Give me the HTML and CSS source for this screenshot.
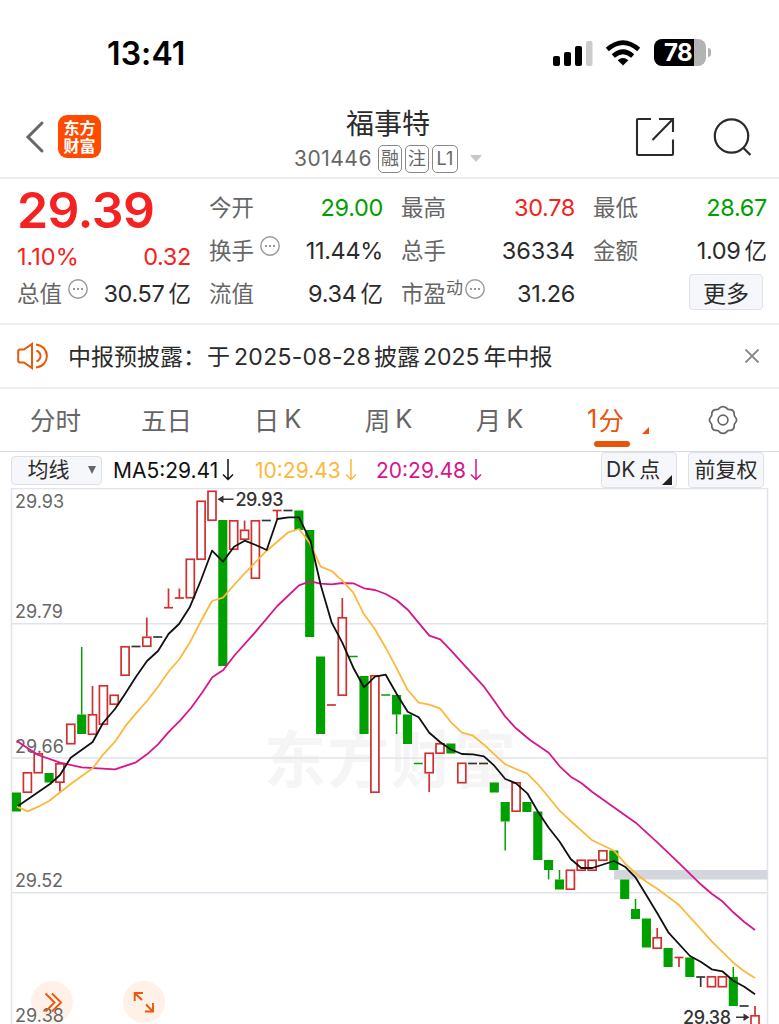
FILE: index.html
```html
<!DOCTYPE html>
<html lang="zh-CN">
<head>
<meta charset="utf-8">
<title>福事特 301446</title>
<link rel="stylesheet" href="styles.css">
</head>
<body>
<div class="phone">
  <header class="status">
    <span class="clock">13:41</span>
    <svg class="signal" width="40" height="26" viewBox="0 0 40 26"><rect x="0" y="16" width="7" height="10" rx="2"/><rect x="11" y="12" width="7" height="14" rx="2"/><rect x="22" y="6" width="7" height="20" rx="2"/><rect x="33" y="1" width="6.5" height="25" rx="2" fill="#ccc"/></svg>
    <svg class="wifi" width="36" height="26" viewBox="0 0 36 26"><path d="M18 25.500L12.700 20.200Q18 15.800 23.300 20.200Z"/><path d="M2.300 9.500Q18-4.300 33.700 9.500M8.300 16Q18 7.500 27.700 16" fill="none" stroke="#000" stroke-width="4.600"/></svg>
    <span class="battery"><b>78</b></span><i class="battery-tip"></i>
  </header>

  <nav class="titlebar">
    <svg class="back" width="20" height="34" viewBox="0 0 20 34"><path d="M17 3L3 17L17 31" fill="none" stroke="#666" stroke-width="3" stroke-linecap="round"/></svg>
    <span class="logo"><span>东方</span><span>财富</span></span>
    <div class="stock">
      <h1>福事特</h1>
      <div class="code"><span class="digits">301446</span><span class="tag">融</span><span class="tag">注</span><span class="tag latin">L1</span><i class="caret"></i></div>
    </div>
    <svg class="share" width="42" height="42" viewBox="0 0 42 42"><path d="M17 2H4Q3 2 3 3V37Q3 38 4 38H38Q39 38 39 37V22.500M25 2H39V15M38.500 2.500L18.500 23" fill="none" stroke="#2b2b2b" stroke-width="2.100"/></svg>
    <svg class="search" width="40" height="42" viewBox="0 0 40 42"><circle cx="18.500" cy="19" r="16.700"/><path d="M30 30.500L37.500 38"/></svg>
  </nav>

  <section class="stats">
    <div class="col first">
      <div class="price">29.39</div>
      <div class="row change red"><span class="num pct">1.10%</span><span class="num">0.32</span></div>
      <div class="row"><span class="label">总值<svg class="dots" viewBox="0 0 20 20"><circle cx="10" cy="10" r="9.200"/><path d="M5 10h2m2 0h2m2 0h2"/></svg></span><span class="num">30.57<em>亿</em></span></div>
    </div>
    <div class="col">
      <div class="row"><span class="label">今开</span><span class="num green">29.00</span></div>
      <div class="row"><span class="label">换手<svg class="dots" viewBox="0 0 20 20"><circle cx="10" cy="10" r="9.200"/><path d="M5 10h2m2 0h2m2 0h2"/></svg></span><span class="num">11.44%</span></div>
      <div class="row"><span class="label">流值</span><span class="num">9.34<em>亿</em></span></div>
    </div>
    <div class="col">
      <div class="row"><span class="label">最高</span><span class="num red">30.78</span></div>
      <div class="row"><span class="label">总手</span><span class="num whole">36334</span></div>
      <div class="row"><span class="label">市盈<small>动</small><svg class="dots tight" viewBox="0 0 20 20"><circle cx="10" cy="10" r="9.200"/><path d="M5 10h2m2 0h2m2 0h2"/></svg></span><span class="num">31.26</span></div>
    </div>
    <div class="col">
      <div class="row"><span class="label">最低</span><span class="num green">28.67</span></div>
      <div class="row"><span class="label">金额</span><span class="num">1.09<em>亿</em></span></div>
      <div class="row end"><button class="more">更多</button></div>
    </div>
  </section>

  <section class="notice">
    <svg class="horn" width="32" height="28" viewBox="0 0 32 28"><path d="M15 2V26L7 20.500H3Q1.200 20.500 1.200 18.500V9.500Q1.200 7.500 3 7.500H7ZM19.500 8.500Q23.500 10.500 23.500 14T19.500 19.500M19 2.500C33.500 4 33.500 24 19 25.500" fill="none" stroke="#e8590c" stroke-width="2"/></svg>
    <p>中报预披露：<span class="yu">于</span><span class="d1">2025-08-28</span>披露<span class="d2">2025</span>年中报</p>
    <svg class="close" width="16" height="16" viewBox="0 0 16 16"><path d="M1.500 1.500L14.500 14.500M14.500 1.500L1.500 14.500" stroke="#888" stroke-width="1.800"/></svg>
  </section>

  <nav class="tabs">
    <span>分时</span><span>五日</span><span>日<b>K</b></span><span>周<b>K</b></span><span>月<b>K</b></span>
    <span class="active"><b>1</b>分<i class="corner"></i></span>
    <span class="settings"><svg class="gear" width="30" height="30" viewBox="0 0 30 30"><circle cx="15" cy="15" r="4.900"/><path d="M11.500 3Q15 .2 18.500 3Q19.500 4.700 21.500 4.700Q25 4 26.200 8Q25.800 10.500 27.200 12Q30 15 27.200 18Q25.800 19.500 26.200 22Q25 26 21.500 25.300Q19.500 25.300 18.500 27Q15 29.800 11.500 27Q10.500 25.300 8.500 25.300Q5 26 3.800 22Q4.200 19.500 2.800 18Q0 15 2.800 12Q4.200 10.500 3.800 8Q5 4 8.500 4.700Q10.500 4.700 11.500 3Z"/></svg></span>
  </nav>

  <div class="toolbar">
    <span class="chip avg">均线<i></i></span>
    <span class="ma ma5"><span>MA5:29.41</span><svg width="12" height="22" viewBox="0 0 12 22"><path d="M6 0V20.500M1 15.500L6 20.500L11 15.500"/></svg></span>
    <span class="ma ma10"><span>10:29.43</span><svg width="12" height="22" viewBox="0 0 12 22"><path d="M6 0V20.500M1 15.500L6 20.500L11 15.500"/></svg></span>
    <span class="ma ma20"><span>20:29.48</span><svg width="12" height="22" viewBox="0 0 12 22"><path d="M6 0V20.500M1 15.500L6 20.500L11 15.500"/></svg></span>
    <span class="chip dk">DK<em>点</em><i></i></span>
    <span class="chip right">前复权</span>
  </div>

  <svg class="chart" width="779" height="536" viewBox="0 488 779 536">
    <g class="watermark"><text x="264" y="783" textLength="252">东方财富</text></g>
    <path class="grid" d="M11.500 1030V488.500H767.500V1030M11 623.700H768M11 758H768M11 892.700H768"/>
    <rect x="614" y="870" width="153.500" height="9.500" fill="#d3d6dc"/>
    <g class="axis"><text x="15" y="508" textLength="49">29.93</text><text x="15" y="618" textLength="48">29.79</text><text x="15" y="752.500" textLength="49">29.66</text><text x="15" y="887" textLength="48">29.52</text></g>
    <g class="fab"><circle cx="52" cy="1002" r="21"/><circle cx="144" cy="1002" r="21"/></g>
    <g class="axis"><text x="15" y="1022" textLength="49">29.38</text></g>
    <path class="fab-line" d="M45.500 993.500L54.500 1002.500L45.500 1011.500M52 993.500L61 1002.500L52 1011.500M134.700 1001V993H143M135 993.300L142 1000M153 1003V1011.500H145M153 1011.500L146 1004.500"/>
    <g id="candles"></g>
    <polyline id="ma20" class="line" stroke="#d6168a"/>
    <polyline id="ma10" class="line" stroke="#fbb93c"/>
    <polyline id="ma5" class="line" stroke="#111"/>
    <g class="mark"><path d="M221 499.300H233.500M736 1017.200H747"/><path class="head" d="M217.500 499.300L223.500 495.500V503.100ZM749.500 1017.200L743.500 1013.400V1021Z"/><text x="235.500" y="505.800" textLength="48">29.93</text><text x="683" y="1023.700" textLength="48">29.38</text></g>
  </svg>
</div>
<script src="chart.js"></script>
</body>
</html>
```

FILE: styles.css
```css
* { box-sizing: border-box; }
body { margin: 0; background: #fff; font-family: Inter, "Noto Sans CJK SC", sans-serif; color: #2b2b2b; }
.phone { width: 779px; height: 1024px; overflow: hidden; }
b, em, i, small { font-style: normal; font-weight: inherit; }

.status { height: 98px; padding: 7px 68px 0 107px; display: flex; align-items: center; color: #000; }
.clock { font-size: 32px; font-weight: 600; letter-spacing: .1px; margin: 2px auto 0 0; }
.wifi { margin: 0 13px 0 12px; }
.battery { width: 52px; height: 27px; border-radius: 8px; background: linear-gradient(90deg, #000 40px, #b3b3b3 40px); color: #fff; font-size: 24px; font-weight: 700; line-height: 27px; padding-left: 10px; letter-spacing: -.5px; }
.battery-tip { width: 3px; height: 9px; margin-left: 2px; background: #b3b3b3; border-radius: 0 3px 3px 0; }
.signal { margin-top: 1px; }

.titlebar { height: 81px; padding: 0 26px 2px 25px; display: flex; align-items: center; border-bottom: 2px solid #eee; }
.logo { width: 43px; height: 43px; margin-left: 13px; border-radius: 9px; background: #ff4a00; color: #fff; display: flex; flex-direction: column; justify-content: center; font: 700 16px/17.500px "Noto Sans CJK SC", sans-serif; text-align: center; }
.stock { flex: 1; display: flex; flex-direction: column; align-items: center; padding: 5px 0 0 41px; }
.stock h1 { margin: 0; font-size: 28px; line-height: 36px; font-weight: 400; }
.code { display: flex; align-items: center; height: 28px; margin-top: 3px; color: #666; font-size: 21px; }
.digits { letter-spacing: .5px; margin-right: 6px; }
.tag { width: 24px; height: 28px; margin-right: 3px; border: 1.500px solid #888; border-radius: 5px; font-size: 18px; line-height: 25px; text-align: center; }
.tag.latin { width: 26px; }
.caret { border: 6.500px solid transparent; border-top: 7px solid #c8c8c8; border-bottom: 0; margin-left: 9px; }
.share { margin: 2px 37px 0 0; }
.search { margin-top: 2px; }
.search circle, .search path { fill: none; stroke: #2b2b2b; stroke-width: 2.200; }

.stats { height: 146px; padding: 7px 12px 0 17px; display: grid; grid-template-columns: 174px 174px 174px 174px; gap: 18px; border-bottom: 2px solid #eee; }
.row { height: 43.300px; display: flex; justify-content: space-between; align-items: center; }
.price { height: 49px; color: #f52222; font-size: 50px; line-height: 48px; font-weight: 600; letter-spacing: -.6px; }
.first .change { height: 43.300px; }
.first .row + .row { height: 32px; }
.label { color: #666; font-size: 22.500px; display: flex; align-items: center; margin-bottom: 4px; }
.label small { font-size: 17px; margin-top: -12px; }
.num { font-size: 23.500px; line-height: 28px; letter-spacing: -.35px; }
.num.whole, .num.pct { letter-spacing: 0; }
.num em { font-size: 22.500px; line-height: 0; margin-left: 4px; letter-spacing: 0; }
.red { color: #f52222; }
.green { color: #00a000; }
.dots { width: 20px; height: 20px; margin: -6px 0 0 6px; fill: none; stroke: #999; stroke-width: 1.400; }
.dots.tight { margin-left: 2px; }
.dots path { stroke-width: 1.800; }
.row.end { justify-content: flex-end; }
.more { width: 74px; height: 36px; margin: -4px 4px 0 0; padding: 0; border: 1.500px solid #dfe1e8; border-radius: 4px; background: #f6f7fa; color: #2b2b2b; font: 23px/30px "Noto Sans CJK SC", sans-serif; }

.notice { height: 64px; padding: 0 19px 0 17px; display: flex; align-items: center; border-bottom: 2px solid #eee; }
.notice p { margin: 0 auto 3px 19px; font-size: 23px; white-space: nowrap; }
.yu { margin-left: 1px; margin-right: 4px; }
.d1 { letter-spacing: .3px; margin-right: 3px; }
.d2 { margin: 0 4px 0 3px; }
.horn { margin-bottom: 1px; }

.tabs { height: 63px; padding: 0 1px; display: grid; grid-template-columns: repeat(7, 111px); border-bottom: 1.500px solid #d9dae3; font-size: 25.500px; color: #666; }
.tabs span { position: relative; display: flex; align-items: center; justify-content: center; padding: 0 2px 3px 0; }
.tabs b { margin-left: 5px; }
.tabs .active { color: #e8540a; padding-right: 12px; }
.tabs .active b { margin: 0 1px 0 0; }
.tabs .settings { padding: 0 0 1px; }
.active::after { content: ""; position: absolute; left: 38px; bottom: 4px; width: 36px; height: 6px; border-radius: 3px; background: #e8540a; }
.corner { position: absolute; left: 86px; bottom: 17px; border-left: 7px solid transparent; border-bottom: 7px solid #e8540a; }
.gear { fill: none; stroke: #666; stroke-width: 1.700; }

.toolbar { height: 36px; padding: 0 15px 0 11px; display: flex; align-items: center; font-size: 21px; }
.chip { position: relative; height: 36px; border: 1.500px solid #dfe1e8; border-radius: 4px; background: #f6f7fa; font-size: 21px; line-height: 33px; white-space: nowrap; text-align: center; }
.avg { width: 91px; height: 29px; line-height: 26px; padding-right: 16px; margin-right: 11px; }
.avg i { position: absolute; right: 5px; top: 9px; border: 4.500px solid transparent; border-top: 8px solid #666; border-bottom: 0; }
.ma { display: flex; align-items: center; white-space: nowrap; }
.ma svg { fill: none; stroke: currentColor; stroke-width: 1.500; margin-left: 4px; }
.ma5 { width: 142px; color: #111; }
.ma10 { width: 121px; color: #fbb93c; }
.ma20 { color: #d6168a; margin-right: auto; }
.dk { width: 76px; text-align: left; padding-left: 4px; margin-right: 11px; }
.dk em { margin-left: 4px; }
.dk i { position: absolute; right: 4px; bottom: 2px; border-left: 10px solid transparent; border-bottom: 10px solid #222; }
.right { width: 76px; }

.chart { display: block; }
.grid { fill: none; stroke: #e2e3ec; stroke-width: 1.500; }
.axis { fill: #666; font-size: 18px; }
.watermark { fill: #f5f5f6; font-size: 62px; font-weight: 700; }
.fab { fill: #fff0e8; }
.fab-line { fill: none; stroke: #e8590c; stroke-width: 1.900; }
.line { fill: none; stroke-width: 1.800; stroke-linejoin: round; }
.mark { fill: #333; font-size: 18px; font-weight: 500; }
.mark path { stroke: #333; stroke-width: 1.500; }
.mark .head { stroke: none; }
.up { fill: none; stroke: #cf3030; stroke-width: 1.700; }
.body-up { fill: #fff; }
.down { fill: #00a000; stroke: #00a000; stroke-width: 1.500; }
.flat { fill: none; stroke: #333; stroke-width: 1.700; }
```

FILE: chart.js
```javascript
// Each candle: kind (u = up, d = down, f = flat), body top, body bottom, high, low.
const candles = `d 792.5 811.5|u 772 793|u 753 773.5|d 773 782.5|u 763 783 763 791.5|u 723.5 744.5|d 714.5 734 647|u 714 735 686|u 685 725|u 694.5 705|u 646 676|f 646.5|u 636.5 647 617.5|f 637|u 607.7 607.7 588.5|u 598 598 588.5|u 558.5 598.5|u 500.5 560|u 490.5 521|d 520 666|u 520 550|u 529.5 540 520.5|u 520 579|f 520.5|u 510.5 510.5 510.5 519|f 510.5|d 510.5 530|d 530 637|d 656.5 734|u 705|u 617 696 598|d 656.5|d 676 734|u 675 793|d 695|d 695 714.5 695 734|d 714.5 744|d 763.5|u 752.5 773.5 752.5 792|u 743 754|d 743.5 753.5|u 762.5 783.5|f 763.5|f 763.5|d 782.5 792.5|d 802 821.5 802 850.5|u 782 812|d 802 812|d 811.5 860|d 860 870 860 879.5|d 879.5 889.5 870|u 869.5 890|u 859.5 871|u 859.5 871|u 850 861|d 850.5 870|d 879.5 899|d 909 919 899|d 918.5 947.5|u 937 949 928|d 948 967|u 957.5 957.5 957.5 967|d 957.5 977|f 977 977 977 987|u 976 987.5|u 976 987.5|d 977 1006 967|f 1006|u 1015 1034 1006`;
const kinds = { u: 'up', d: 'down', f: 'flat' };
let markup = '';
candles.split('|').forEach((entry, i) => {
  const [kind, ...values] = entry.split(' ');
  const [top, bottom = top, high = top, low = bottom] = values.map(Number);
  const x = +(16.5 + 10.86 * i).toFixed(1);
  const cls = kinds[kind];
  if (high < top) markup += `<path class="${cls}" d="M${x} ${high}V${top}"/>`;
  if (low > bottom) markup += `<path class="${cls}" d="M${x} ${bottom}V${low}"/>`;
  if (bottom === top) {
    markup += `<path class="${cls}" d="M${x - 4.5} ${top}H${x + 4.5}"/>`;
  } else if (kind === 'u') {
    markup += `<rect class="up body-up" x="${x - 4}" y="${top + .8}" width="8" height="${bottom - top - 1.6}"/>`;
  } else {
    markup += `<rect class="down" x="${x - 3.8}" y="${top + .75}" width="7.6" height="${bottom - top - 1.5}"/>`;
  }
});
document.getElementById('candles').innerHTML = markup;

const lines = {
  ma5: '18,806 50,784 60,775 70.7,757.7 92.7,742 103,723 115,709 125,694 136,676.7 147,661 158,651 168.5,634 179,624 190,606.7 201,580 212,550.7 223,561.7 234,546.7 244.7,540.7 255.7,545 266.7,550 277.3,519 288.3,517.3 299,517.3 310.7,541.7 320.7,585 331.7,622.7 342.3,642.7 353.3,667.7 364,687.3 375,676.7 385.7,674.7 396.7,694 407.7,711.7 418.7,717.3 429.3,732.7 440.3,742.3 451,749.5 462,754 473,754.3 484,756.3 494.3,765.7 505.3,779 516,783.3 527.3,793.3 538,811.7 548.7,827.7 559.7,841.7 570.7,859 581.3,868 592.3,868 614,861 625,866.7 635.7,877.7 646.7,895.7 657.3,913.3 668.3,932.3 690,956 700.7,961.7 711.7,969.3 722.3,971.3 733.3,980.7 744.3,986.7 755,994.3',
  ma10: '17,806.7 27.7,811.3 38.3,806.7 49.3,800.7 71.7,783.3 92.7,768.3 103.3,754.3 115,741.7 125.7,725.7 136,713.3 147,701 158,686.7 169,671 179.5,659 190.3,641.7 201,621 212,601 223,597.7 234,585 244.7,573.3 266.7,550.7 288.3,532.3 299,529 310,543.3 320.7,566.7 331.7,571 342.3,580.7 353.3,592.7 364,614.3 375,629.3 385.7,647.7 396.7,668.3 407.7,690 418.7,702.7 429.3,704.7 440.3,708.7 451,722.3 462,732.7 473,735.7 484,744.7 494.3,754.3 505.3,764.3 516,769 527.3,773.7 538,784.3 559.7,810.7 570.7,821 592.3,840.3 614,850.7 625,863.3 635.7,873.3 646.7,882 657.3,888.7 679.3,905.3 700.7,929 711.7,941.3 733.3,962.7 744.3,971.3 755,978',
  ma20: '16.7,740.7 27.7,748.3 38.3,755 60,762.7 81.7,767.3 115,769.3 136,762.3 147,754.3 158,744.3 169,731.7 180,720.7 191,708 201.7,693.3 212.3,677.3 223.3,670 234,656 255.7,631.7 277.3,606 299,585.3 310,581.3 320.7,583.7 331.7,584.3 342.3,583 353.3,583.3 364,588.3 375,590 385.7,594 396.7,600.3 407.7,609.7 429.3,635.7 440.3,639.3 450,649.3 462,662.7 484,686.7 494.3,701 505.3,716.7 516,728.3 530,740 548.7,752.7 559.7,766.3 570.7,776.7 581.3,783 592.3,792 635.7,822.7 657.3,842.3 679.3,863.3 700.7,884.3 711.7,893.7 722.3,901.3 733.3,912.3 744.3,922 755,930'
};
for (const id in lines) document.getElementById(id).setAttribute('points', lines[id]);
```
